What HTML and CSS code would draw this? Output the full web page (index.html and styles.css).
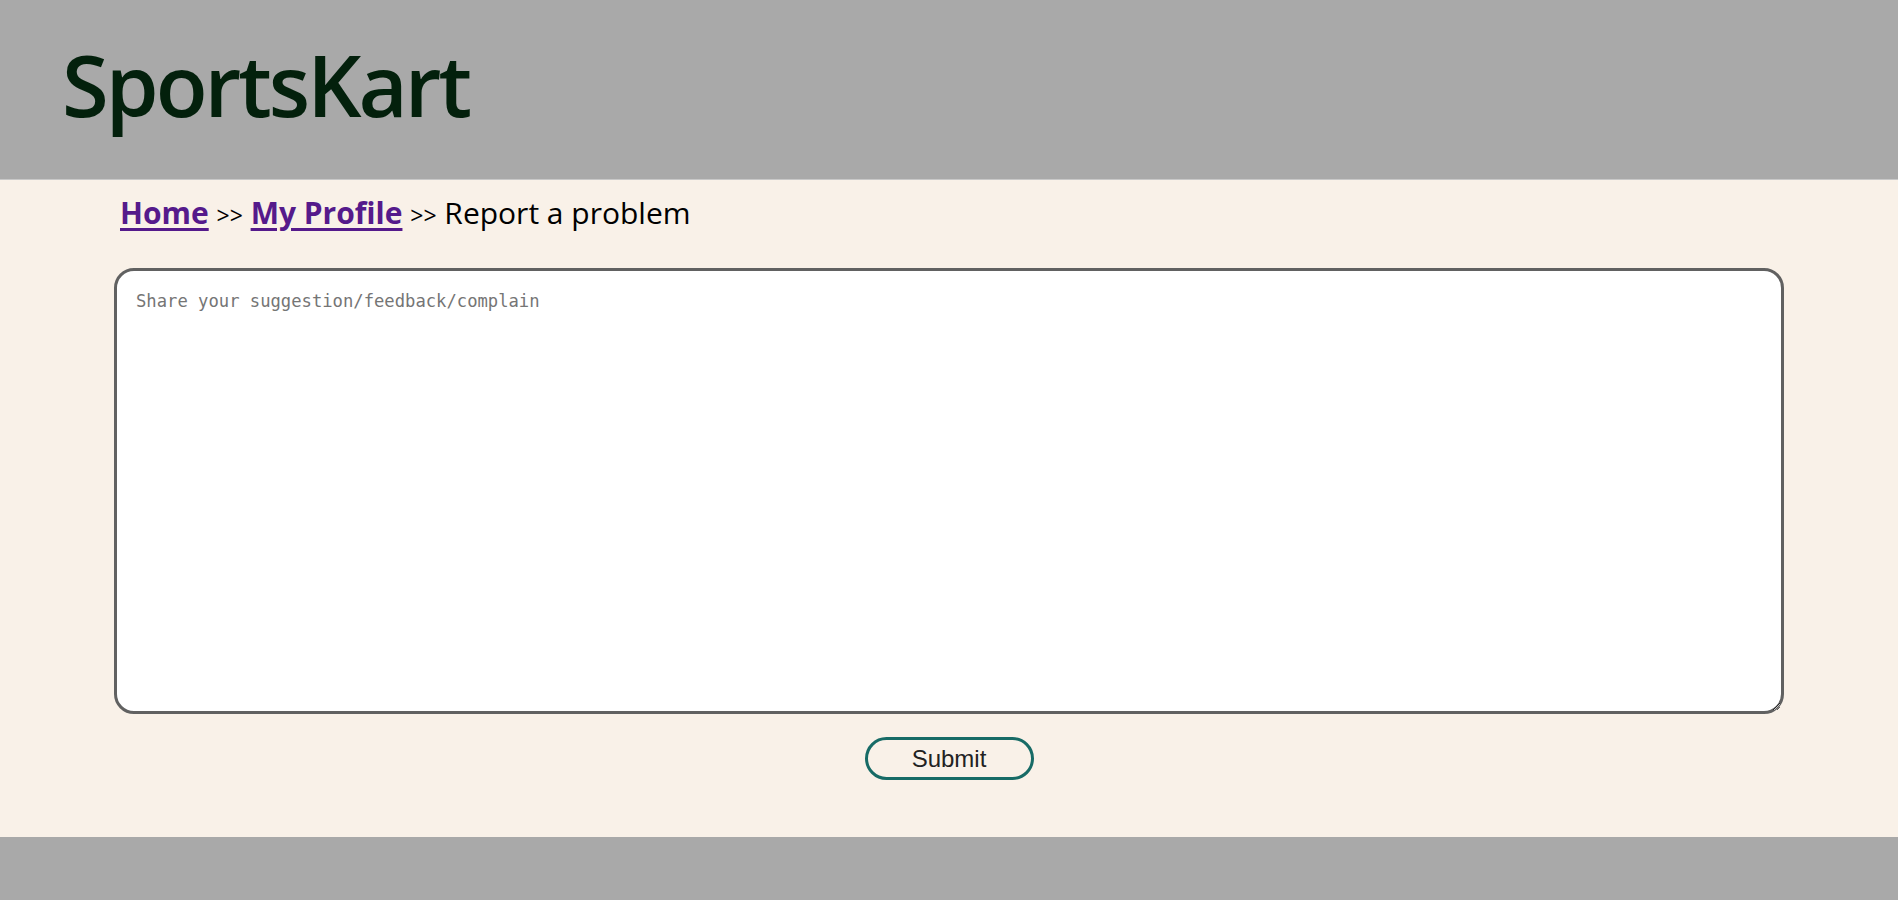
FILE: index.html
```html
<!DOCTYPE html>
<html>
<head>
<meta charset="utf-8">
<title>SportsKart - Report a problem</title>
<link rel="stylesheet" href="styles.css">
</head>
<body>
<header class="site-header">
  <h1 class="logo">SportsKart</h1>
</header>
<main class="content">
  <nav class="crumbs">
    <a href="#" class="crumb-link">Home</a> <span class="sep">&gt;&gt;</span> <a href="#" class="crumb-link">My Profile</a> <span class="sep">&gt;&gt;</span> <span class="current">Report a problem</span>
  </nav>
  <form class="report-form">
    <textarea class="report-text" placeholder="Share your suggestion/feedback/complain"></textarea>
    <button type="button" class="submit-btn">Submit</button>
  </form>
</main>
<footer class="site-footer"></footer>
</body>
</html>
```

FILE: styles.css
```css
html, body {
  margin: 0;
  padding: 0;
}
body {
  background: #a9a9a9;
  font-family: "Open Sans", "DejaVu Sans", sans-serif;
}
.site-header {
  background: #a9a9a9;
  border-bottom: 1px solid #c8c8c8;
  box-sizing: border-box;
  height: 180px;
  padding-left: 62px;
  display: flex;
  align-items: flex-start;
}
.logo {
  margin: 0;
  padding-top: 42px;
  font-family: "Open Sans", sans-serif;
  font-weight: 600;
  font-size: 85px;
  line-height: 1;
  color: #03200c;
  letter-spacing: -3px;
}
.content {
  background: #f9f1e8;
  height: 657px;
  box-sizing: border-box;
  padding-top: 12px;
  display: flex;
  flex-direction: column;
  align-items: center;
}
.crumbs {
  align-self: flex-start;
  margin-left: 120px;
  font-size: 30px;
  line-height: 42px;
  color: #000;
}
.crumb-link {
  color: #551a8b;
  font-weight: 700;
  text-decoration: underline;
  text-decoration-thickness: 3px;
  text-underline-offset: 4px;
}
.sep {
  font-size: 23px;
}
.report-form {
  width: 1670px;
  margin-top: 32px;
  display: flex;
  flex-direction: column;
  align-items: center;
}
.report-text {
  width: 100%;
  height: 446px;
  box-sizing: border-box;
  border: 3px solid #616161;
  border-radius: 20px;
  background: #fff;
  padding: 20px 19px;
  font-family: "DejaVu Sans Mono", monospace;
  font-size: 17.2px;
  resize: both;
  outline: none;
}
.report-text::placeholder {
  color: #757575;
}
.submit-btn {
  margin-top: 23px;
  width: 169px;
  height: 43px;
  box-sizing: border-box;
  border: 3px solid #176b66;
  border-radius: 22px;
  background: transparent;
  font-family: "Liberation Sans", Arial, sans-serif;
  font-size: 24px;
  color: #222;
  padding: 0;
}
.site-footer {
  height: 63px;
  background: #a9a9a9;
}
```
